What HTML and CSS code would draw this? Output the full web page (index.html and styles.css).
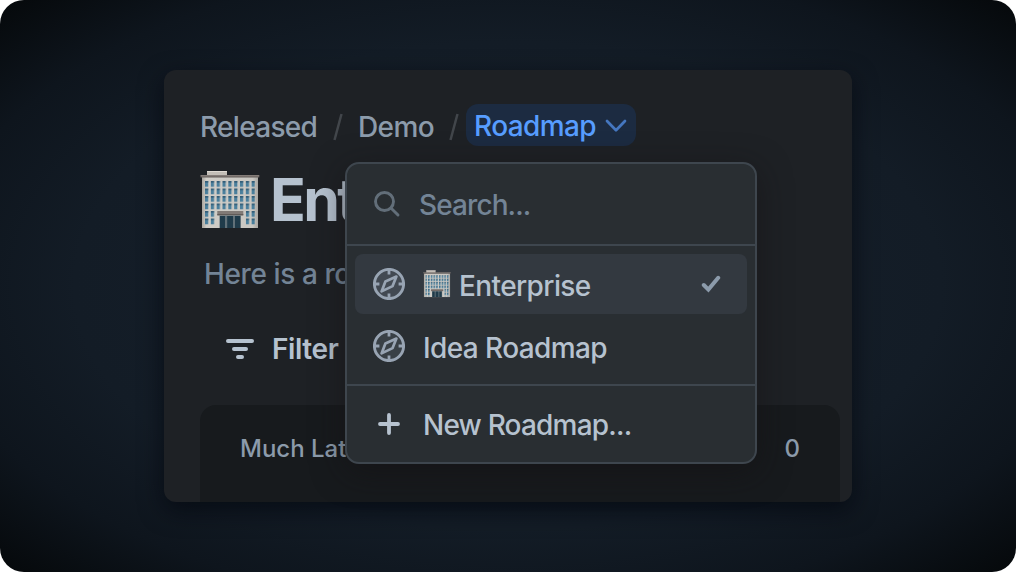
FILE: index.html
```html
<!DOCTYPE html>
<html lang="en">
<head>
<meta charset="utf-8">
<title>Roadmap</title>
<link rel="stylesheet" href="styles.css">
</head>
<body>
<svg class="defs" width="0" height="0" aria-hidden="true">
  <defs>
    <linearGradient id="wall" x1="0" x2="1"><stop offset="0" stop-color="#aaa69f"/><stop offset=".08" stop-color="#d0cdc7"/><stop offset=".9" stop-color="#c9c7c2"/><stop offset="1" stop-color="#a9a7a3"/></linearGradient>
    <linearGradient id="roof" x1="0" x2="0" y1="0" y2="1"><stop offset="0" stop-color="#8d8580"/><stop offset="1" stop-color="#5f5855"/></linearGradient>
    <pattern id="panes" x="5" y="11" width="5.83" height="7.5" patternUnits="userSpaceOnUse"><rect width="3.2" height="5.8" fill="#4a7f9c"/><rect y="0" width="3.2" height="1.6" fill="#335d77"/></pattern>
    <symbol id="building" viewBox="0 0 60 60">
      <path fill="#c3beb7" d="M7 1h20v5H7z"/><path fill="#ded9d2" d="M7 1h20v1H7z"/>
      <path fill="url(#wall)" d="M2 7h56v51H2z"/>
      <path fill="url(#roof)" d="M.5 5h58.8v2.6H.5z"/>
      <path fill="url(#panes)" d="M5 11h50v29.5H5zM5 40.5h10V56H5zM45.8 40.5h9.2V56H45.8z"/>
      <path fill="#817a76" d="M17.3 41h26v4h-26z"/><path fill="#615b58" d="M17.3 44h26v1.4h-26z"/>
      <path fill="#617078" d="M19.5 45.4h21.5V58H19.5z"/>
      <path fill="#203b4a" d="M20 46h5v12h-5zM27.2 46h5.8v12h-5.8zM35 46h5v12h-5z"/>
    </symbol>
    <symbol id="compass" viewBox="0 0 32 32">
      <circle cx="16" cy="16" r="14.6" fill="#9aa8ba" fill-opacity=".15" stroke="currentColor" stroke-width="2.9"/>
      <path fill="none" stroke="currentColor" stroke-width="2.8" d="M16 1v5.4M16 25.6V31M1 16h5.4M25.6 16H31"/>
      <path fill="none" stroke="currentColor" stroke-width="2.7" stroke-linejoin="round" d="M23.4 8.6 19.6 18.1 8.6 23.4 12.4 13.4z"/>
    </symbol>
  </defs>
</svg>
<main class="stage">
  <section class="card">
    <nav class="crumbs">
      <span class="crumb">Released</span>
      <svg class="slash" width="10" height="28" viewBox="0 0 10 28"><path d="M8.5 1 1.5 27"/></svg>
      <span class="crumb crumb-demo">Demo</span>
      <svg class="slash" width="10" height="28" viewBox="0 0 10 28"><path d="M8.5 1 1.5 27"/></svg>
      <span class="current"><span class="current-label">Roadmap</span><svg width="22" height="14" viewBox="0 0 22 14"><path d="M2 2l9 9.2L20 2"/></svg></span>
    </nav>
    <h1 class="title"><svg width="60" height="60"><use href="#building"/></svg><span>Ent</span></h1>
    <p class="description">Here is a ro</p>
    <div class="filter">
      <svg width="28" height="20" viewBox="0 0 28 20"><path d="M2 2h24M8 10h12M12 18h4"/></svg>
      <span>Filter</span>
    </div>
    <div class="column"><span>Much Lat</span><span class="count">0</span></div>
    <div class="menu">
      <div class="search">
        <svg width="28" height="28" viewBox="0 0 28 28"><circle cx="11.5" cy="11.5" r="9"/><path d="M18.2 18.2l6.8 6.8"/></svg>
        <span>Search...</span>
      </div>
      <div class="options">
        <div class="option selected">
          <svg class="compass" width="32" height="32"><use href="#compass"/></svg>
          <svg class="mini" width="28" height="28"><use href="#building"/></svg>
          <span class="enterprise">Enterprise</span>
          <svg class="check" width="20" height="18" viewBox="0 0 20 18"><path d="M2.8 10l4.6 4.6L17.2 2.8"/></svg>
        </div>
        <div class="option">
          <svg class="compass" width="32" height="32"><use href="#compass"/></svg>
          <span>Idea Roadmap</span>
        </div>
      </div>
      <div class="create">
        <svg width="24" height="24" viewBox="0 0 24 24"><path d="M12 3v18M3 12h18"/></svg>
        <span>New Roadmap...</span>
      </div>
    </div>
  </section>
</main>
</body>
</html>
```
FILE: styles.css
```css
* { box-sizing: border-box; }
body { margin: 0; background: #fff; font-family: Inter, "Liberation Sans", sans-serif; font-size: 28px; font-weight: 450; letter-spacing: -.6px; line-height: 34px; white-space: nowrap; }
svg { display: block; flex: none; }
.defs { position: absolute; }
.stage { width: 1016px; height: 572px; padding: 70px 164px; border-radius: 24px; overflow: hidden; background: radial-gradient(ellipse 71% 71% at 50% 50%, #17212d 0%, #131c26 60%, #0e151d 80%, #05080a 100%); }
.card { position: relative; width: 688px; height: 432px; padding: 34px 12px 0 36px; border-radius: 12px; background: #1e2125; box-shadow: 0 8px 24px rgba(0, 4, 12, .65); }
.crumbs { display: flex; align-items: center; height: 42px; color: #8c9bab; }
.crumb { width: 118px; padding-top: 3px; letter-spacing: -.7px; }
.crumb-demo { width: 76px; letter-spacing: -.6px; }
.slash { margin: 3px 15px 0 15px; fill: none; stroke: #42464b; stroke-width: 2.5; }
.crumb-demo + .slash { margin-right: 7px; }
.current { display: flex; align-items: center; width: 170px; height: 42px; padding-left: 8px; border-radius: 12px; background: #1c2b41; color: #579dff; }
.current-label { width: 131px; padding-top: 1px; }
.current svg { margin-top: 2px; fill: none; stroke: #4577c0; stroke-width: 2.7; stroke-linecap: round; stroke-linejoin: round; }
.title { display: flex; align-items: center; gap: 10px; height: 60px; margin: 24px 0 0; font-size: 59px; font-weight: 700; letter-spacing: -2.6px; line-height: 60px; color: #b6c2cf; }
.description { margin: 27px 0 0 4px; color: #738496; letter-spacing: -.4px; }
.filter { display: flex; align-items: center; gap: 18px; margin: 41px 0 0 26px; color: #b6c2cf; font-weight: 600; letter-spacing: -.4px; }
.filter svg { fill: none; stroke: currentColor; stroke-width: 4; stroke-linecap: round; }
.column { display: flex; justify-content: space-between; height: 97px; margin-top: 39px; padding: 27px 40px 0; border-radius: 16px 16px 0 0; background: #171a1d; color: #8c9bab; font-size: 24px; font-weight: 550; letter-spacing: 0; }
.menu { position: absolute; left: 181px; top: 92px; width: 412px; height: 302px; border: 2px solid #3e464e; border-radius: 14px; background: #292e32; color: #b6c2cf; box-shadow: 0 8px 32px rgba(20, 16, 18, .55); }
.search { display: flex; align-items: center; height: 82px; padding: 1px 26px 0; gap: 18px; border-bottom: 2px solid #3e464e; color: #738496; letter-spacing: -.9px; }
.search svg { margin-top: -2px; fill: none; stroke: #626e79; stroke-width: 2.9; stroke-linecap: round; }
.options { height: 140px; padding: 8px 8px 0; border-bottom: 2px solid #3e464e; }
.option { display: flex; align-items: center; height: 60px; margin-bottom: 2px; padding: 0 26px 0 18px; border-radius: 8px; }
.selected { background: #333940; }
.compass { margin-right: 18px; color: #98a4b3; }
.mini { margin-right: 8px; }
.option span { padding-top: 3px; }
.enterprise { flex: 1; }
.check { fill: none; stroke: #8c9bab; stroke-width: 4; stroke-linecap: round; stroke-linejoin: miter; }
.create { display: flex; align-items: center; gap: 22px; height: 76px; padding: 0 30px; letter-spacing: -.8px; }
.create span { padding-top: 2px; }
.create svg { fill: none; stroke: currentColor; stroke-width: 3.8; stroke-linecap: round; }
```
